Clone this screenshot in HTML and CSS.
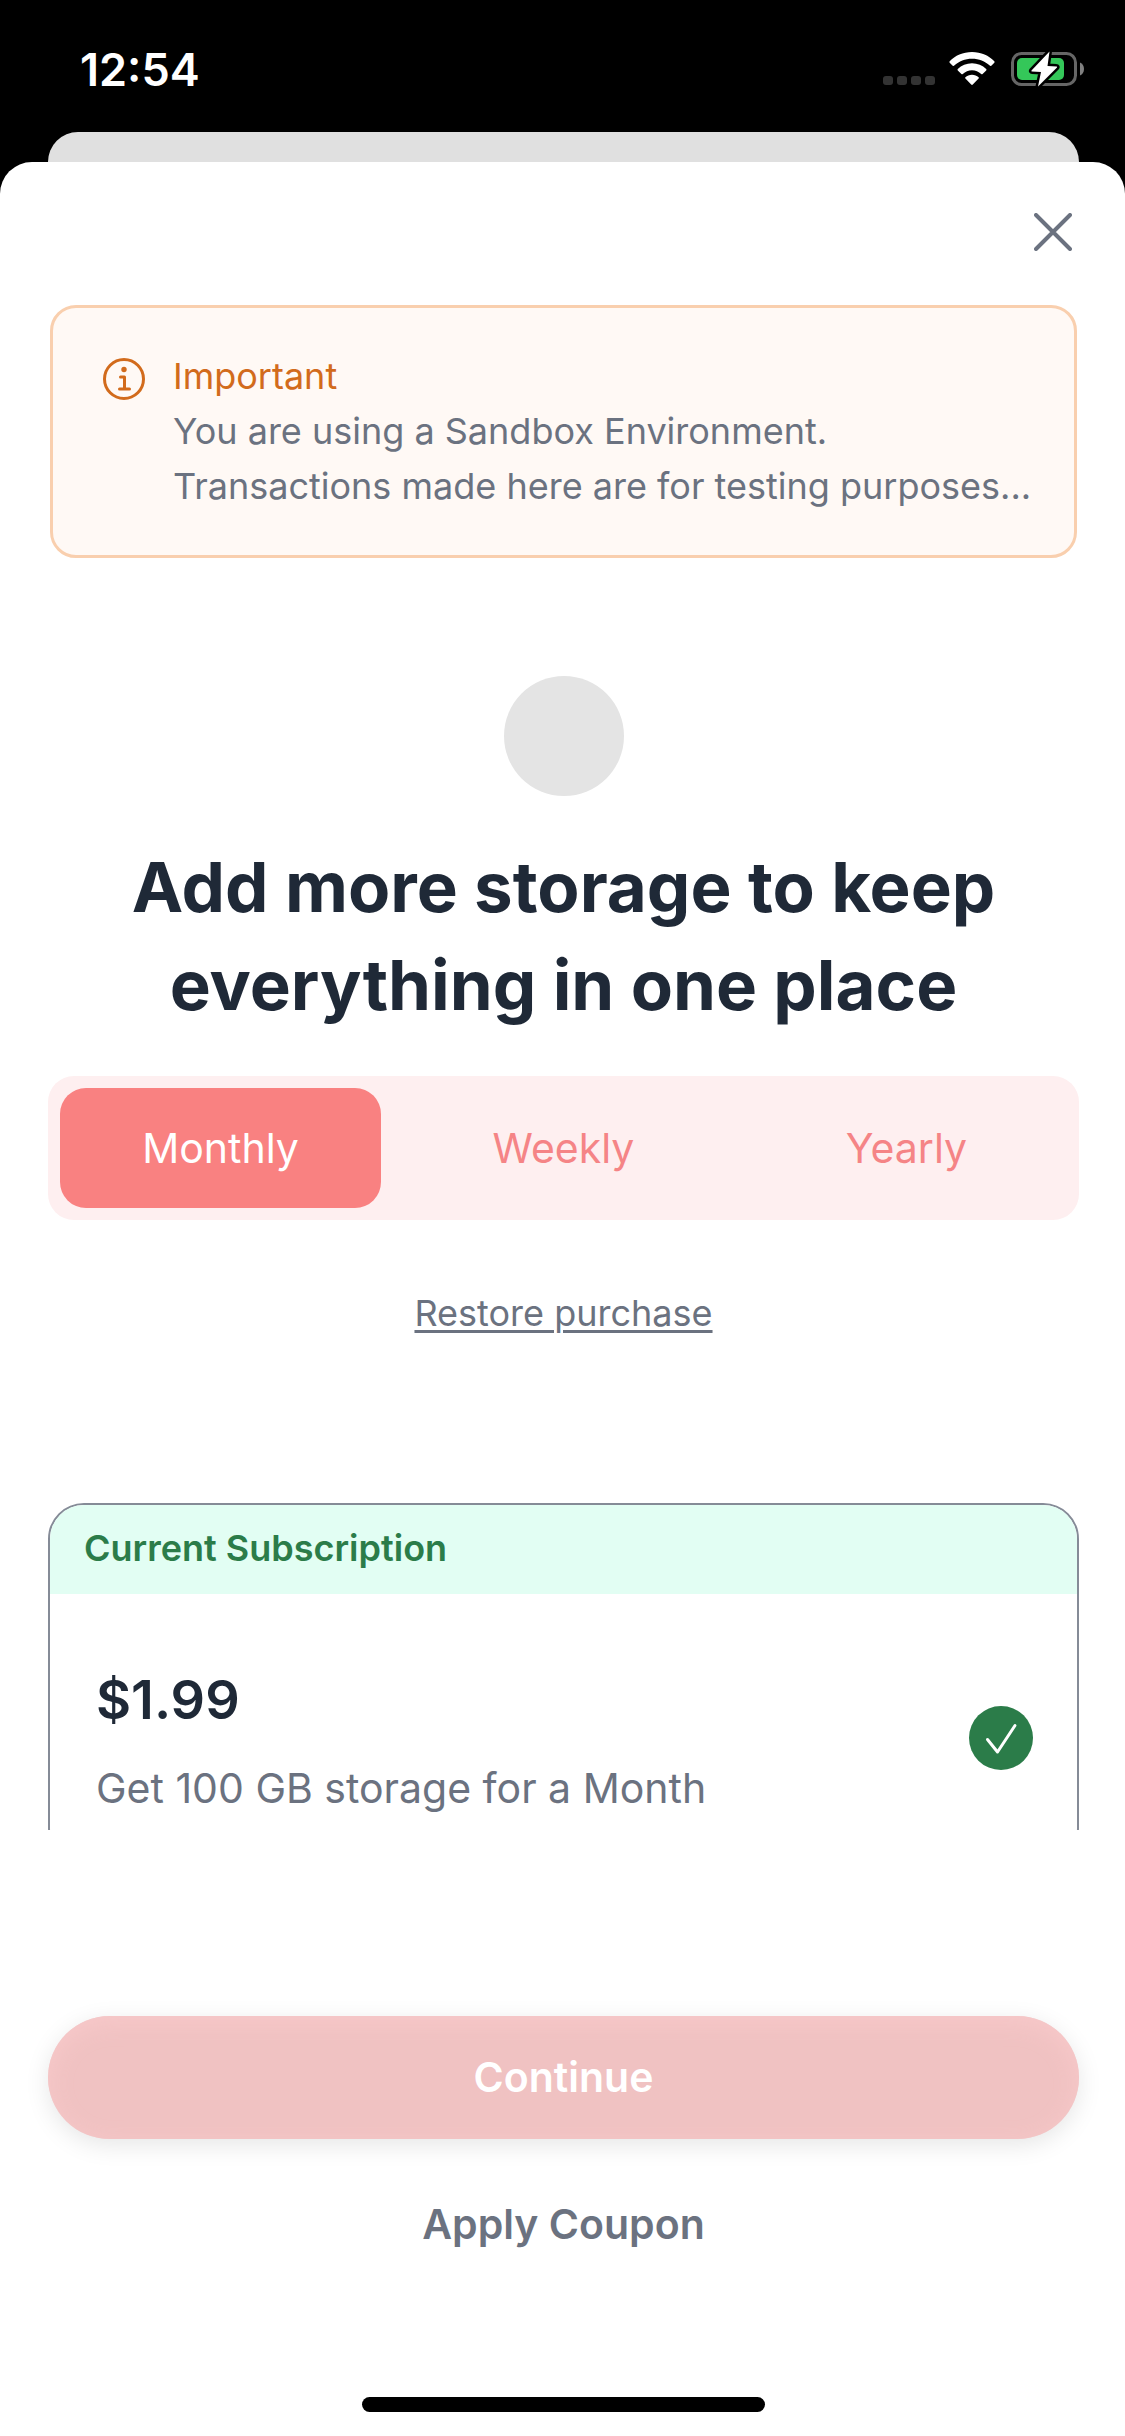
FILE: index.html
```html
<!DOCTYPE html>
<html lang="en">
<head>
  <meta charset="utf-8">
  <meta name="viewport" content="width=device-width, initial-scale=1">
  <title>Add more storage</title>
  <link rel="stylesheet" href="styles.css">
</head>
<body>
  <header class="status-bar">
    <time class="clock">12:54</time>
    <div class="status-icons">
      <svg class="signal" width="52" height="34" viewBox="0 0 52 34" fill="#333" aria-hidden="true">
        <rect x="0" y="24" width="10" height="9" rx="3"/>
        <rect x="14" y="24" width="10" height="9" rx="3"/>
        <rect x="28" y="24" width="10" height="9" rx="3"/>
        <rect x="42" y="24" width="10" height="9" rx="3"/>
      </svg>
      <svg class="wifi" width="46" height="34" viewBox="0 0 46 34" fill="#fff" aria-hidden="true">
        <path d="M23 0C32 0 40 3.600 45.300 9.200Q46 10 45.300 10.700L42.300 13.700Q41.500 14.300 40.700 13.600C36 9.300 30 6.700 23 6.700S10 9.300 5.300 13.600Q4.500 14.300 3.700 13.700L.7 10.700Q0 10 .7 9.200C6 3.600 14 0 23 0Z"/>
        <path d="M23 11.300C28.500 11.300 33.500 13.400 37.200 17Q37.900 17.700 37.200 18.400L33.600 21.900Q32.900 22.500 32.200 21.900C29.700 19.600 26.500 18.200 23 18.200S16.300 19.600 13.800 21.900Q13.100 22.500 12.400 21.900L8.800 18.400Q8.100 17.700 8.800 17C12.500 13.400 17.500 11.300 23 11.300Z"/>
        <path d="M23 22.700C25.600 22.700 27.900 23.700 29.600 25.200Q30.300 25.900 29.600 26.600L23.800 32.600Q23 33.400 22.200 32.600L16.400 26.600Q15.700 25.900 16.400 25.200C18.100 23.700 20.400 22.700 23 22.700Z"/>
      </svg>
      <svg class="battery" width="74" height="38" viewBox="0 0 74 38" aria-hidden="true">
        <rect x="1.500" y="3.500" width="63" height="31" rx="9" fill="none" stroke="#666" stroke-width="3"/>
        <path d="M69 12.500C71.500 13.500 73 16 73 19S71.500 24.500 69 25.500Z" fill="#808080"/>
        <rect x="6" y="8" width="47" height="22" rx="5" fill="#34c759"/>
        <path d="M38.500 1.500 20.500 20.500Q20 21.500 21 21.500L30 22 27 36.500 46 17.500Q46.500 16.500 45.500 16.500L36.500 16Z" fill="#fff" stroke="#000" stroke-width="5" stroke-linejoin="round"/>
        <path d="M38.500 1.500 20.500 20.500Q20 21.500 21 21.500L30 22 27 36.500 46 17.500Q46.500 16.500 45.500 16.500L36.500 16Z" fill="#fff"/>
      </svg>
    </div>
  </header>

  <div class="backdrop"></div>

  <main class="sheet">
    <div class="toolbar">
      <button class="close" type="button" aria-label="Close">
        <svg width="38" height="38" viewBox="0 0 38 38" fill="none" stroke="#6b7280" stroke-width="4" stroke-linecap="round" aria-hidden="true">
          <path d="M2 2 36 36M36 2 2 36"/>
        </svg>
      </button>
    </div>

    <section class="notice">
      <svg class="notice-icon" width="42" height="42" viewBox="0 0 42 42" fill="none" stroke="#d26b1c" stroke-width="3" stroke-linecap="round" stroke-linejoin="round" aria-hidden="true">
        <circle cx="21" cy="21" r="19.500"/>
        <path d="M17.500 19H21.500V31M16.500 31H26.500"/>
        <circle cx="21" cy="11.500" r="2.700" fill="#d26b1c" stroke="none"/>
      </svg>
      <div class="notice-body">
        <h2 class="notice-title">Important</h2>
        <p class="notice-text">You are using a Sandbox Environment.<br>Transactions made here are for testing purposes...</p>
      </div>
    </section>

    <div class="avatar"></div>

    <h1 class="headline">Add more storage to keep everything in one place</h1>

    <div class="periods">
      <button class="period period-active" type="button" aria-pressed="true">Monthly</button>
      <button class="period" type="button" aria-pressed="false">Weekly</button>
      <button class="period" type="button" aria-pressed="false">Yearly</button>
    </div>

    <a class="restore" href="#restore">Restore purchase</a>

    <div class="plans">
      <article class="plan">
        <h2 class="plan-badge">Current Subscription</h2>
        <div class="plan-body">
          <div class="plan-info">
            <p class="plan-price">$1.99</p>
            <p class="plan-detail">Get 100 GB storage for a Month</p>
          </div>
          <svg class="plan-check" width="64" height="64" viewBox="0 0 64 64" aria-hidden="true">
            <circle cx="32" cy="32" r="32" fill="#2b7c49"/>
            <path d="M18.500 33.500 28.500 46 46 19.500" fill="none" stroke="#fff" stroke-width="3" stroke-linecap="round" stroke-linejoin="round"/>
          </svg>
        </div>
      </article>
    </div>

    <footer class="actions">
      <button class="continue" type="button">Continue</button>
      <button class="coupon" type="button">Apply Coupon</button>
      <div class="home-indicator"></div>
    </footer>
  </main>
</body>
</html>
```

FILE: styles.css
```css
* {
  box-sizing: border-box;
  margin: 0;
  padding: 0;
}

body {
  display: flex;
  flex-direction: column;
  height: 100vh;
  background: #000;
  color: #6b7280;
  font-family: Inter, "Liberation Sans", sans-serif;
  font-size: 36px;
  line-height: 55px;
}

button {
  border: 0;
  background: none;
  color: inherit;
  font: inherit;
  cursor: pointer;
}

svg {
  display: block;
  flex: none;
}

/* Status bar */
.status-bar {
  display: flex;
  justify-content: space-between;
  align-items: center;
  flex: none;
  height: 132px;
  padding: 6px 40px 0 80px;
  color: #fff;
}

.clock {
  font-size: 45px;
  font-weight: 600;
}

.status-icons {
  display: flex;
  align-items: center;
}

.wifi {
  margin-left: 14px;
}

.battery {
  margin-left: 16px;
}

/* Sheet */
.backdrop {
  flex: none;
  height: 30px;
  margin: 0 46px 0 48px;
  border-radius: 30px 30px 0 0;
  background: #e0e0e0;
}

.sheet {
  display: flex;
  flex-direction: column;
  flex: 1;
  min-height: 0;
  padding: 0 46px 0 48px;
  border-radius: 32px 32px 0 0;
  background: #fff;
}

.toolbar {
  display: flex;
  justify-content: flex-end;
  flex: none;
  height: 143px;
  padding: 46px 2px 0 0;
}

.close {
  width: 48px;
  height: 48px;
  padding: 5px;
}

/* Sandbox notice */
.notice {
  display: flex;
  gap: 28px;
  flex: none;
  margin: 0 2px;
  padding: 41px 36px 41px 50px;
  border: 3px solid #f9cfae;
  border-radius: 26px;
  background: #fff9f5;
}

.notice-icon {
  margin-top: 9px;
}

.notice-title {
  color: #d26b1c;
  font-size: 36px;
  font-weight: 400;
}

/* Intro */
.avatar {
  flex: none;
  align-self: center;
  width: 120px;
  height: 120px;
  margin-top: 118px;
  border-radius: 50%;
  background: #e4e4e4;
}

.headline {
  max-width: 900px;
  margin: 42px auto;
  color: #1f2937;
  font-size: 69px;
  font-weight: 700;
  line-height: 98px;
  text-align: center;
}

/* Billing period switch */
.periods {
  display: grid;
  grid-template-columns: repeat(3, 1fr);
  gap: 22px;
  flex: none;
  padding: 12px;
  border-radius: 26px;
  background: #feeff0;
}

.period {
  height: 120px;
  border-radius: 26px;
  color: #f58486;
  font-size: 41px;
}

.period-active {
  background: #f98181;
  color: #fff;
}

.restore {
  align-self: center;
  margin-top: 66px;
  color: #6b7280;
  text-decoration-thickness: 3px;
  text-underline-offset: 4px;
}

/* Plans */
.plans {
  flex: 1;
  min-height: 0;
  margin-top: 162px;
  overflow: hidden;
}

.plan {
  border: 2px solid #858b97;
  border-radius: 36px;
  overflow: hidden;
}

.plan-badge {
  height: 89px;
  padding: 16px 34px;
  background: #e2fef3;
  color: #2b7c49;
  font-size: 36px;
  font-weight: 600;
}

.plan-body {
  display: flex;
  justify-content: space-between;
  align-items: center;
  padding: 64px 44px 44px 46px;
}

.plan-price {
  margin-bottom: 16px;
  color: #1f2937;
  font-size: 54px;
  font-weight: 600;
  line-height: 84px;
}

.plan-detail {
  font-size: 41px;
  line-height: 60px;
}

/* Footer actions */
.actions {
  display: flex;
  flex-direction: column;
  flex: none;
  padding: 186px 0 24px;
}

.continue,
.coupon {
  height: 123px;
  font-size: 41px;
  font-weight: 600;
}

.continue {
  border-radius: 62px;
  background: #f0c2c2;
  box-shadow: 0 6px 24px rgba(0, 0, 0, 0.1), inset 0 6px 24px #f8c9ca;
  color: #fff;
}

.coupon {
  align-self: center;
  margin-top: 24px;
}

.home-indicator {
  align-self: center;
  width: 403px;
  height: 15px;
  margin-top: 111px;
  border-radius: 8px;
  background: #000;
}
```
